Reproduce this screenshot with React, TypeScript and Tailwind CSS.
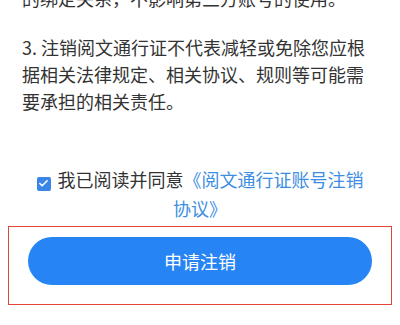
import { Check } from "lucide-react";

const font = { fontFamily: '"Noto Sans CJK SC", "Noto Sans", sans-serif' };

export default function App() {
  return (
    <div className="h-[325px] w-[400px] overflow-hidden bg-white" style={font}>
      <div className="px-[22px] text-[18px] leading-[27px] text-[#333333]">
        <p className="mt-[-15px]">的绑定关系，不影响第三方账号的使用。</p>
        <p className="mt-[22px]">
          3. 注销阅文通行证不代表减轻或免除您应根据相关法律规定、相关协议、规则等可能需要承担的相关责任。
        </p>
      </div>

      <div className="mt-[50px] px-[32px] text-center text-[18px] leading-[29px]">
        <span className="mr-[7px] inline-flex h-[14px] w-[14px] translate-y-[1px] items-center justify-center rounded-[2px] bg-[#3a86e8] align-[-1px]">
          <Check className="h-[11px] w-[11px] text-white" strokeWidth={3.5} />
        </span>
        <span className="text-[#333333]">我已阅读并同意</span>
        <span className="text-[#3d8de0]">《阅文通行证账号注销协议》</span>
      </div>

      <div className="mx-[8px] mt-[3px] border-[1.5px] border-[#e2463b] px-[19px] pt-[10px] pb-[19px]">
        <button
          type="button"
          className="flex h-[48px] w-full items-center justify-center rounded-full bg-[#2684f4] text-[18px] text-white"
        >
          申请注销
        </button>
      </div>
    </div>
  );
}
